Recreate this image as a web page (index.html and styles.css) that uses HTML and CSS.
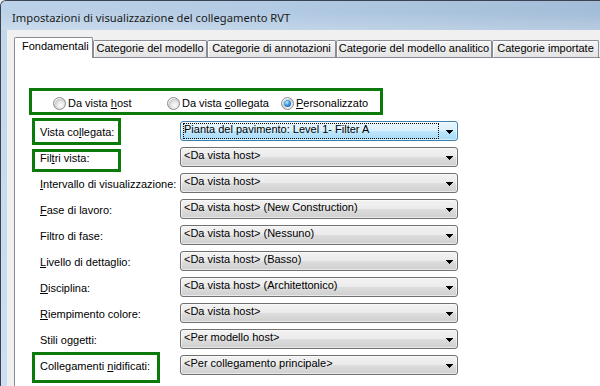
FILE: index.html
```html
<!DOCTYPE html>
<html lang="it">
<head>
<meta charset="utf-8">
<title>Impostazioni di visualizzazione del collegamento RVT</title>
<link rel="stylesheet" href="styles.css">
</head>
<body>
<div class="window">
  <div class="titlebar"><span class="title">Impostazioni di visualizzazione del collegamento RVT</span></div>
  <div class="frame">
    <div class="frame-edge"></div>
    <div class="client">
      <div class="tabs">
        <div class="tab active t1">Fondamentali</div>
        <div class="tab t2">Categorie del modello</div>
        <div class="tab t3">Categorie di annotazioni</div>
        <div class="tab t4">Categorie del modello analitico</div>
        <div class="tab t5">Categorie importate</div>
      </div>
      <div class="panel">
        <div class="radios">
          <div class="opt"><span class="radio"></span><span>Da vista <u>h</u>ost</span></div>
          <div class="opt"><span class="radio"></span><span>Da vista <u>c</u>ollegata</span></div>
          <div class="opt"><span class="radio on"></span><span><u>P</u>ersonalizzato</span></div>
        </div>
        <div class="form">
          <div class="lbl">Vista co<u>l</u>legata:</div>
          <div class="combo focus"><span class="val">Pianta del pavimento: Level 1- Filter A</span><svg class="arrow" width="7" height="4" viewBox="0 0 7 4" shape-rendering="crispEdges"><path d="M0 0h7v1h-1v1h-1v1h-1v1h-1v-1h-1v-1h-1v-1h-1z" fill="#000"/></svg></div>

          <div class="lbl">Fil<u>t</u>ri vista:</div>
          <div class="combo"><span class="val">&lt;Da vista host&gt;</span><svg class="arrow" width="7" height="4" viewBox="0 0 7 4" shape-rendering="crispEdges"><path d="M0 0h7v1h-1v1h-1v1h-1v1h-1v-1h-1v-1h-1v-1h-1z" fill="#000"/></svg></div>

          <div class="lbl"><u>I</u>ntervallo di visualizzazione:</div>
          <div class="combo"><span class="val">&lt;Da vista host&gt;</span><svg class="arrow" width="7" height="4" viewBox="0 0 7 4" shape-rendering="crispEdges"><path d="M0 0h7v1h-1v1h-1v1h-1v1h-1v-1h-1v-1h-1v-1h-1z" fill="#000"/></svg></div>

          <div class="lbl"><u>F</u>ase di lavoro:</div>
          <div class="combo"><span class="val">&lt;Da vista host&gt; (New Construction)</span><svg class="arrow" width="7" height="4" viewBox="0 0 7 4" shape-rendering="crispEdges"><path d="M0 0h7v1h-1v1h-1v1h-1v1h-1v-1h-1v-1h-1v-1h-1z" fill="#000"/></svg></div>

          <div class="lbl">Filtro di fase:</div>
          <div class="combo"><span class="val">&lt;Da vista host&gt; (Nessuno)</span><svg class="arrow" width="7" height="4" viewBox="0 0 7 4" shape-rendering="crispEdges"><path d="M0 0h7v1h-1v1h-1v1h-1v1h-1v-1h-1v-1h-1v-1h-1z" fill="#000"/></svg></div>

          <div class="lbl"><u>L</u>ivello di dettaglio:</div>
          <div class="combo"><span class="val">&lt;Da vista host&gt; (Basso)</span><svg class="arrow" width="7" height="4" viewBox="0 0 7 4" shape-rendering="crispEdges"><path d="M0 0h7v1h-1v1h-1v1h-1v1h-1v-1h-1v-1h-1v-1h-1z" fill="#000"/></svg></div>

          <div class="lbl"><u>D</u>isciplina:</div>
          <div class="combo"><span class="val">&lt;Da vista host&gt; (Architettonico)</span><svg class="arrow" width="7" height="4" viewBox="0 0 7 4" shape-rendering="crispEdges"><path d="M0 0h7v1h-1v1h-1v1h-1v1h-1v-1h-1v-1h-1v-1h-1z" fill="#000"/></svg></div>

          <div class="lbl"><u>R</u>iempimento colore:</div>
          <div class="combo"><span class="val">&lt;Da vista host&gt;</span><svg class="arrow" width="7" height="4" viewBox="0 0 7 4" shape-rendering="crispEdges"><path d="M0 0h7v1h-1v1h-1v1h-1v1h-1v-1h-1v-1h-1v-1h-1z" fill="#000"/></svg></div>

          <div class="lbl">Stili o<u>g</u>getti:</div>
          <div class="combo"><span class="val">&lt;Per modello host&gt;</span><svg class="arrow" width="7" height="4" viewBox="0 0 7 4" shape-rendering="crispEdges"><path d="M0 0h7v1h-1v1h-1v1h-1v1h-1v-1h-1v-1h-1v-1h-1z" fill="#000"/></svg></div>

          <div class="lbl">Collegamenti <u>n</u>idificati:</div>
          <div class="combo"><span class="val">&lt;Per collegamento principale&gt;</span><svg class="arrow" width="7" height="4" viewBox="0 0 7 4" shape-rendering="crispEdges"><path d="M0 0h7v1h-1v1h-1v1h-1v1h-1v-1h-1v-1h-1v-1h-1z" fill="#000"/></svg></div>
        </div>

        <div class="mark m-radios"></div>
        <div class="mark m-vista"></div>
        <div class="mark m-filtri"></div>
        <div class="mark m-coll"></div>
      </div>
    </div>
  </div>
</div>
</body>
</html>
```
FILE: styles.css
```css
html, body {
  margin: 0;
  padding: 0;
}
body {
  width: 600px;
  height: 386px;
  overflow: hidden;
  background: #f0f0f0;
  font-family: "Liberation Sans", Arial, sans-serif;
  font-size: 11px;
  color: #000;
}
u {
  text-decoration: underline;
  text-underline-offset: 1px;
}
.window {
  height: 386px;
  box-sizing: border-box;
  border-top: 1px solid #3b4250;
  border-left: 1px solid #3b4250;
  border-top-left-radius: 6px;
  display: flex;
  flex-direction: column;
  overflow: hidden;
  background: #bfd4ea;
}
.titlebar {
  height: 29px;
  flex: none;
  box-sizing: border-box;
  padding: 9px 0 0 11px;
  background:
    linear-gradient(to bottom, rgba(255,255,255,0) 40%, rgba(255,255,255,0.22) 100%),
    linear-gradient(to right, #bcd2e8 0%, #b2cae3 45%, #a3bdd8 100%);
}
.title {
  font-family: "Noto Sans", "Open Sans", sans-serif;
  font-size: 11.2px;
  line-height: 16px;
  color: #1a1a1a;
  white-space: nowrap;
}
.frame {
  flex: 1;
  display: flex;
  min-height: 0;
}
.frame-edge {
  width: 6px;
  flex: none;
  background: linear-gradient(to bottom, #c3d7ec, #cddff1);
}
.client {
  flex: 1;
  min-width: 0;
  background: #f0f0f0;
  padding: 7px 0 0 7px;
}
.tabs {
  display: flex;
  align-items: flex-end;
  height: 20px;
  position: relative;
  z-index: 1;
}
.tab {
  box-sizing: border-box;
  flex: none;
  height: 17px;
  border: 1px solid #898c95;
  border-bottom: none;
  border-radius: 2px 2px 0 0;
  background: linear-gradient(#f5f5f5, #e4e4e4);
  box-shadow: inset 1px 1px 0 #fff;
  padding-top: 1px;
  line-height: 13px;
  text-align: center;
  white-space: nowrap;
  overflow: hidden;
}
.tab.active {
  height: 21px;
  margin-bottom: -1px;
  padding-top: 2px;
  padding-left: 7px;
  text-align: left;
  background: #fff;
  box-shadow: none;
}
.t1 { width: 79px; }
.t2 { width: 114px; }
.t3 { width: 129px; }
.t4 { width: 156px; }
.t5 { width: 107px; }
.panel {
  position: relative;
  height: 360px;
  background: #fff;
  border: 1px solid #898c95;
  border-right: none;
}
.radios {
  display: grid;
  grid-template-columns: repeat(3, 114px);
  margin: 39px 0 0 38px;
  height: 13px;
}
.opt {
  display: flex;
  align-items: center;
  gap: 2px;
  height: 13px;
  line-height: 13px;
  white-space: nowrap;
}
.radio {
  position: relative;
  flex: none;
  width: 13px;
  height: 13px;
  box-sizing: border-box;
  border-radius: 50%;
  border: 1px solid #8a8d91;
  background: radial-gradient(circle at 62% 66%, #fbfbfb 0%, #e8e8e8 35%, #c8c9cb 62%, #f3f3f3 68%, #ffffff 100%);
}
.radio.on::after {
  content: "";
  position: absolute;
  left: 2px;
  top: 2px;
  width: 7px;
  height: 7px;
  border-radius: 50%;
  background: radial-gradient(circle at 40% 35%, #c4ecff 0%, #48a2ea 40%, #1a57a3 80%, #0f3f80 100%);
}
.form {
  display: grid;
  grid-template-columns: 140px 278px;
  grid-auto-rows: 20px;
  row-gap: 6px;
  margin: 11px 0 0 25px;
}
.lbl {
  padding-top: 5px;
  line-height: 13px;
  white-space: nowrap;
}
.combo {
  box-sizing: border-box;
  height: 20px;
  border: 1px solid #707070;
  border-radius: 3px;
  display: flex;
  align-items: flex-start;
  background: linear-gradient(#f2f2f2 0%, #ebebeb 48%, #dddddd 52%, #cfcfcf 100%);
  box-shadow: inset 0 0 0 1px rgba(255,255,255,0.55);
}
.val {
  flex: 1;
  padding-left: 3px;
  line-height: 14px;
  white-space: nowrap;
  overflow: hidden;
}
.arrow {
  flex: none;
  margin: 8px 4px 0 0;
}
.combo.focus {
  border-color: #3c7fb1;
  background: linear-gradient(#eaf6fd 0%, #d9f0fc 48%, #bee6fd 52%, #a7d9f5 100%);
}
.combo.focus .val {
  flex: 0 0 256px;
  box-sizing: border-box;
  height: 16px;
  margin: 1px 0 0 2px;
  padding-left: 0;
  border: 1px dotted #000;
  line-height: 11px;
  overflow: visible;
}
.combo.focus .arrow {
  margin-left: auto;
}
.mark {
  position: absolute;
  box-sizing: border-box;
  border: 3px solid #0b7a0b;
  pointer-events: none;
}
.m-radios { left: 14px; top: 30px; width: 354px; height: 27px; }
.m-vista  { left: 17px; top: 60px; width: 89px;  height: 27px; }
.m-filtri { left: 17px; top: 91px; width: 89px;  height: 23px; }
.m-coll   { left: 17px; top: 294px; width: 128px; height: 31px; }
```
